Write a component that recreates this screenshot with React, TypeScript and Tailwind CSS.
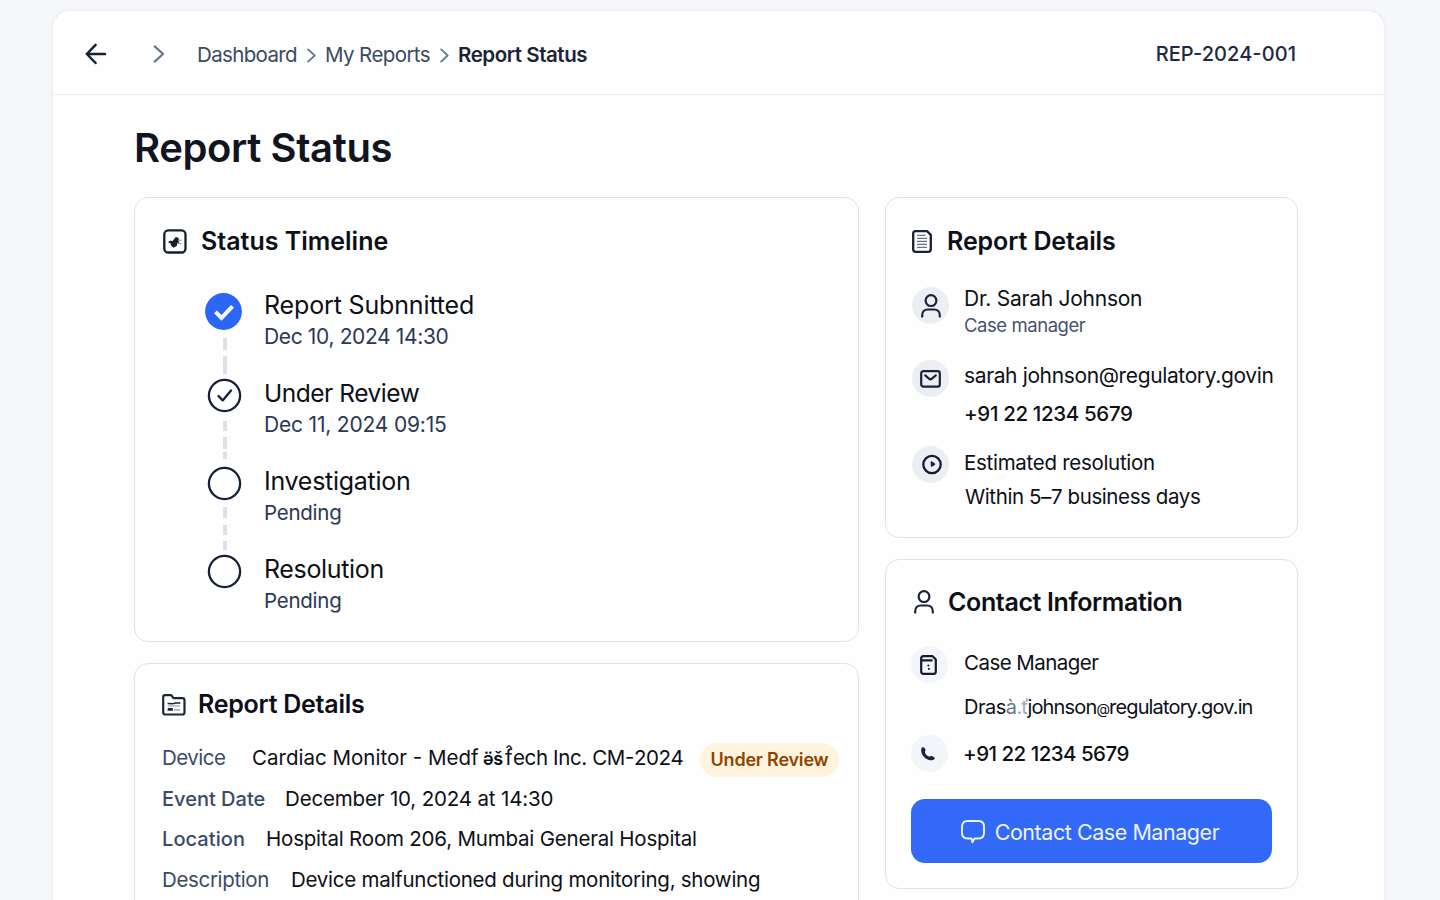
import React from 'react';
import type { ReactNode } from 'react';

type State = 'done' | 'active' | 'pending';

function BackIcon() {
  return (
    <svg width="22" height="22" viewBox="0 0 22 22" fill="none" stroke="#172136" strokeWidth="2.5" strokeLinecap="round" strokeLinejoin="round">
      <path d="M20 11H1.8M10.6 1.8L1.8 11l8.8 9" />
    </svg>
  );
}

function Chevron({ className }: { className: string }) {
  return (
    <svg className={className} viewBox="0 0 10 16" fill="none" stroke="#66748d" strokeWidth="1.9" strokeLinecap="round" strokeLinejoin="round">
      <path d="M1.2 1.2L8.6 8l-7.4 6.8" />
    </svg>
  );
}

function TimelineIcon() {
  return (
    <svg className="-mt-[2px]" width="24" height="25" viewBox="0 0 24 25" fill="none" stroke="#161e30" strokeWidth="2.3">
      <rect x="1.3" y="1.3" width="21.2" height="22.2" rx="4" />
      <path d="M4.800 13l3-1.600 1.600.8 3.400-4.200 3 1-.4 3.200 1.200.8-2.400 1.600-.4 2.400-3.400 1.800-2.200-2-.6-2.400z" fill="#161e30" stroke="none" />
      <path d="M15 11.200h3.600M15 14.600h3.400" stroke="#7c879b" strokeWidth="1" />
    </svg>
  );
}

function FolderIcon() {
  return (
    <svg width="24" height="22" viewBox="0 0 24 22" fill="none" stroke="#1c2538" strokeWidth="2.2" strokeLinejoin="round">
      <path d="M1.2 3.2c0-1.2.7-2 1.8-2h6.2l2.3 3h8.8c1.4 0 2.2.8 2.2 2v12.3c0 1.2-.8 2-2.2 2H3.4c-1.4 0-2.200-.8-2.200-2z" />
      <path d="M5.6 9.600l5 .2 3-.8 4.800-.1" strokeWidth="1.500" />
      <path d="M5.800 12h12M12 15.900h6.200" stroke="#8a94a6" strokeWidth="1.100" />
      <path d="M6 14h4.800v2.800H5.400z" fill="#1c2538" stroke="none" />
    </svg>
  );
}

function DocumentIcon() {
  return (
    <svg width="20" height="23" viewBox="0 0 20 23" fill="none" stroke="#1a2134" strokeWidth="2.3" strokeLinejoin="round">
      <path d="M3.6 1.2h11.400l3.800 3.600v14.200c0 1.700-.9 2.800-2.600 2.800H3.600c-1.500 0-2.400-1-2.400-2.600V3.800c0-1.600.9-2.600 2.400-2.600z" />
      <path d="M5 5.400h8.500M5 8.400h10M5 11.400h10M5 14.400h10M5 17.400h10" stroke="#69748a" strokeWidth="1.400" />
    </svg>
  );
}

function PersonIcon({ className }: { className: string }) {
  return (
    <svg className={className} viewBox="0 0 20 24" fill="none" stroke="#1a2338" strokeWidth="2.2" strokeLinecap="round">
      <circle cx="10" cy="6.600" r="5.400" />
      <path d="M1.200 22.600v-1.400c0-3.400 2.300-5.700 5.600-5.700h6.400c3.300 0 5.600 2.300 5.600 5.700v1.400" />
    </svg>
  );
}

function MailIcon() {
  return (
    <svg width="21" height="18" viewBox="0 0 21 18" fill="none" stroke="#1a2338" strokeWidth="2.200" strokeLinecap="round" strokeLinejoin="round">
      <rect x="1.200" y="1.200" width="18.600" height="15.400" rx="2.200" />
      <path d="M5.200 5.400l3.800 3.200c.9.800 2 .8 2.900 0l3.900-3.200" />
    </svg>
  );
}

function ClockIcon() {
  return (
    <svg className="ml-[3px]" width="20" height="21" viewBox="0 0 20 21" fill="none" stroke="#141c30" strokeWidth="2.300">
      <circle cx="10" cy="10.500" r="8.700" />
      <path d="M9 7.600l3.200 1.600c.9.500.8 1.500-.1 1.900L9.400 12.600z" fill="#141c30" stroke="#141c30" strokeWidth="0.800" />
    </svg>
  );
}

function CaseIcon() {
  return (
    <svg className="-ml-[2px]" width="17" height="20" viewBox="0 0 17 20" fill="none" stroke="#141b2d" strokeWidth="2.200" strokeLinejoin="round">
      <path d="M1.200 3.600c0-1.600.8-2.400 2.200-2.400h9.200l3.200 3.400v11.800c0 1.500-.8 2.400-2.200 2.400H3.400c-1.400 0-2.200-.9-2.200-2.400zM1.400 5.400h11.200" />
      <path d="M7.600 10l1.400 1.200M8 13.800h1.800" strokeWidth="1.700" />
    </svg>
  );
}

function PhoneIcon() {
  return (
    <svg className="-ml-[3px]" width="14" height="14" viewBox="0 0 14 14" fill="#1b2540">
      <path d="M1 .6C1.800 0 3 0 3.600.900l.9 1.600c.3.700.1 1.300-.6 1.900-.3 2.200 2.600 5.200 4.800 5.100.6-.6 1.300-.7 1.900-.4l2.300.9c.9.500 1 1.500.4 2.300-.9 1-2.400 1.300-4.300.9C4.400 12.200.9 8.500.3 4.400.1 2.700.200 1.300 1 .6z" />
    </svg>
  );
}

function ChatIcon() {
  return (
    <svg className="-mt-[2px]" width="24" height="24" viewBox="0 0 24 24" fill="none" stroke="#eef3ff" strokeWidth="1.900" strokeLinejoin="round">
      <path d="M6.600 1h10.800c3.500 0 5.600 2.200 5.600 5.600v6.200c0 3.500-2.200 5.700-5.600 5.700h-3.800l-2.200 3.800-.8-3.800h-4C3.100 18.500 1 16.300 1 12.800V6.600C1 3.200 3.100 1 6.600 1z" />
    </svg>
  );
}

function Dot({ state }: { state: State }) {
  if (state === 'done') {
    return (
      <svg className="-ml-px block" width="37" height="37" viewBox="0 0 37 37" fill="none">
        <circle cx="18.500" cy="18.500" r="18.400" fill="#2c66f8" />
        <path d="M10.500 18.800l6 6 11-11.500" stroke="#fff" strokeWidth="4" />
      </svg>
    );
  }
  return (
    <svg className="ml-px block" width="35" height="35" viewBox="0 0 35 35" fill="none" stroke="#16203a" strokeWidth="2.300">
      <circle cx="17.500" cy="17.500" r="15.600" />
      {state === 'active' && <path d="M11.500 18l4.200 4.400 8.300-9.900" strokeLinecap="round" strokeLinejoin="round" />}
    </svg>
  );
}

function TimelineItem({ state, top, title, note, children }: { state: State; top: string; title: ReactNode; note: ReactNode; children?: ReactNode }) {
  return (
    <li className="flex h-[88px]">
      <div className={`flex w-[37px] flex-col items-center ${top}`}>
        <Dot state={state} />
        <div className="ml-[3px] flex flex-col items-center">{children}</div>
      </div>
      <div className="ml-[22px] whitespace-nowrap">
        <div className="text-[25px] leading-[30px] text-[#0d1017]">{title}</div>
        <div className="mt-[1px] text-[21px] leading-[32px] text-[#2b3854]">{note}</div>
      </div>
    </li>
  );
}

function Dash({ className }: { className: string }) {
  return <i className={`block w-[3.500px] bg-[#dde1e7] ${className}`} />;
}

function Bubble({ className, children }: { className: string; children: ReactNode }) {
  return <div className={`flex size-[37px] shrink-0 items-center justify-center rounded-full ${className}`}>{children}</div>;
}

function Card({ className, children }: { className: string; children: ReactNode }) {
  return <section className={`rounded-[14px] border border-[#dfe4ea] bg-[#fefefe] ${className}`}>{children}</section>;
}

export default function App() {
  return (
    <div className="h-[900px] w-[1440px] overflow-hidden bg-[#f5f7fa] pt-[11px] font-['Inter',sans-serif] text-[#0d1017]">
      <div className="ml-[53px] h-[920px] w-[1331px] rounded-[17px] bg-[#fefefe] shadow-[0_0_4px_rgba(40,60,100,0.10)]">
        <header className="flex h-[84px] items-center border-b border-[#ebeef3] pt-[3px] pl-[32px] whitespace-nowrap">
          <BackIcon />
          <Chevron className="ml-[46px] h-[18px] w-[12px]" />
          <nav className="mt-px ml-[32px] flex items-center text-[20.500px] leading-[28px] text-[#3c4963]">
            <span className="w-[110px] tracking-[-0.650px]">Dashboard</span>
            <Chevron className="mt-px h-[15px] w-[9px]" />
            <span className="ml-[9px] w-[115px] tracking-[-0.600px]">My Reports</span>
            <Chevron className="mt-px h-[15px] w-[9px]" />
            <span className="ml-[9px] font-semibold tracking-[-0.450px] text-[#1b2436]">Report Status</span>
          </nav>
          <span className="mr-[88px] ml-auto text-[20px] leading-[28px] font-medium tracking-[0.070px] text-[#1e2a44] [font-feature-settings:'case']">REP-2024-001</span>
        </header>

        <main className="pr-[87px] pl-[81px]">
          <h1 className="pt-[27px] text-[40px] leading-[52px] font-semibold tracking-[-0.400px] whitespace-nowrap text-[#10151f]">Report Status</h1>

          <div className="mt-[23px] flex items-start gap-[26px]">
            <div className="flex w-[725px] shrink-0 flex-col gap-[21px]">
              <Card className="h-[445px] pt-[28px] pl-[28px]">
                <h2 className="flex h-[32px] items-center gap-[14px] text-[25px] font-semibold whitespace-nowrap">
                  <TimelineIcon />
                  Status Timeline
                </h2>
                <ol className="mt-[32px] ml-[42px]">
                  <TimelineItem state="done" top="pt-[3px]" title={<span className="tracking-[-0.150px]">Report Subnnitted</span>} note={<span className="tracking-[-0.360px]">Dec 10, 2024 14:30</span>}>
                    <Dash className="mt-[8px] h-[12px]" />
                    <Dash className="mt-[6px] h-[18px]" />
                  </TimelineItem>
                  <TimelineItem state="active" top="pt-0" title={<span className="text-[24.500px] tracking-[-0.470px]">Under Review</span>} note={<span className="tracking-[-0.190px]">Dec 11, 2024 09:15</span>}>
                    <Dash className="mt-[8px] h-[10px]" />
                    <Dash className="mt-[6px] h-[12px]" />
                    <Dash className="mt-[3px] h-[7px]" />
                  </TimelineItem>
                  <TimelineItem state="pending" top="pt-0" title={<span className="tracking-[-0.270px]">Investigation</span>} note={<span className="text-[20.500px] tracking-[-0.250px]">Pending</span>}>
                    <Dash className="mt-[6px] h-[11px]" />
                    <Dash className="mt-[7px] h-[10px]" />
                    <Dash className="mt-[6px] h-[9px]" />
                  </TimelineItem>
                  <TimelineItem state="pending" top="pt-0" title={<span className="tracking-[-0.350px]">Resolution</span>} note={<span className="text-[20.500px] tracking-[-0.250px]">Pending</span>} />
                </ol>
              </Card>

              <Card className="h-[300px] pt-[25px] pl-[27px]">
                <h2 className="flex h-[32px] items-center gap-[12px] text-[25px] font-semibold tracking-[-0.260px] whitespace-nowrap">
                  <FolderIcon />
                  Report Details
                </h2>
                <dl className="mt-[17px] text-[20.500px] whitespace-nowrap">
                  <div className="flex h-[41px] items-center">
                    <dt className="w-[90px] tracking-[-0.500px] text-[#3c4a68]">Device</dt>
                    <dd className="flex items-center">
                      <span className="w-[231px] tracking-[0.010px] [font-feature-settings:'case']">Cardiac Monitor - Medf</span>
                      <span className="w-[22px] text-[18px] font-semibold tracking-[-0.500px]">ӛš</span>
                      <span className="w-[8px]">f̂</span>
                      <span className="w-[187px] tracking-[-0.380px]">ech Inc. CM<span className="[font-feature-settings:'case']">-</span>2024</span>
                    </dd>
                    <dd className="mt-[2px] h-[34px] w-[139px] rounded-full bg-[#fff5df] text-center text-[18px] leading-[34px] font-semibold tracking-[-0.210px] text-[#924400]">Under Review</dd>
                  </div>
                  <div className="flex h-[41px] items-center">
                    <dt className="-mt-px w-[123px] text-[20px] font-medium text-[#3c4a68]">Event Date</dt>
                    <dd className="tracking-[-0.160px]">December 10, 2024 at 14:30</dd>
                  </div>
                  <div className="-mt-px flex h-[40px] items-center">
                    <dt className="w-[104px] text-[20px] font-medium tracking-[0.080px] text-[#3c4a68]">Location</dt>
                    <dd className="tracking-[-0.200px]">Hospital Room 206, Mumbai General Hospital</dd>
                  </div>
                  <div className="mt-px flex h-[41px] items-center">
                    <dt className="w-[129px] tracking-[-0.350px] text-[#3c4a68]">Description</dt>
                    <dd className="tracking-[-0.260px]">Device malfunctioned during monitoring, showing</dd>
                  </div>
                </dl>
              </Card>
            </div>

            <div className="flex w-[413px] shrink-0 flex-col gap-[21px]">
              <Card className="h-[341px] pt-[27px] pl-[26px]">
                <h2 className="flex h-[32px] items-center gap-[15px] text-[25px] font-semibold tracking-[-0.100px] whitespace-nowrap">
                  <DocumentIcon />
                  <span className="mt-px">Report Details</span>
                </h2>
                <div className="mt-[30px] flex h-[73px] gap-[15px] whitespace-nowrap">
                  <Bubble className="bg-[#eceef4]"><PersonIcon className="h-[24px] w-[20px]" /></Bubble>
                  <div className="-mt-[2px]">
                    <div className="text-[21px] leading-[28px] tracking-[-0.250px]">Dr. Sarah Johnson</div>
                    <div className="-mt-px text-[18.500px] leading-[26px] tracking-[-0.440px] text-[#46536d]">Case manager</div>
                  </div>
                </div>
                <div className="flex h-[86px] gap-[15px] whitespace-nowrap">
                  <Bubble className="bg-[#eceef4]"><MailIcon /></Bubble>
                  <div className="mt-px">
                    <div className="text-[21px] leading-[30px] tracking-[-0.370px]">sarah johnson@regulatory.govin</div>
                    <div className="mt-[8px] text-[20.500px] leading-[30px] font-medium tracking-[-0.350px]">+91 22 1234 5679</div>
                  </div>
                </div>
                <div className="flex gap-[15px] whitespace-nowrap">
                  <Bubble className="bg-[#eceef4]"><ClockIcon /></Bubble>
                  <div className="mt-[2px] text-[20.500px] leading-[30px]">
                    <div className="tracking-[-0.290px]">Estimated resolution</div>
                    <div className="mt-[4px] pl-px tracking-[-0.400px]">Within 5–7 business days</div>
                  </div>
                </div>
              </Card>

              <Card className="h-[330px] pt-[26px] pl-[25px]">
                <h2 className="flex h-[32px] items-center gap-[14px] pl-[3px] text-[25px] font-semibold tracking-[-0.370px] whitespace-nowrap">
                  <PersonIcon className="h-[24px] w-[20px]" />
                  <span className="mt-px">Contact Information</span>
                </h2>
                <div className="mt-[28px] flex h-[89px] gap-[16px] whitespace-nowrap">
                  <Bubble className="bg-[#f3f5fa]"><CaseIcon /></Bubble>
                  <div className="text-[20.500px] leading-[30px]">
                    <div className="mt-[2px] tracking-[-0.540px]">Case Manager</div>
                    <div className="mt-[14px] flex text-[20px]">
                      <span className="tracking-[-0.500px]">Dras<span className="text-[#66758f]">à</span></span>
                      <span className="w-[11px] tracking-[-1px] text-[#9aabc4]">.ť</span>
                      <span className="tracking-[-0.850px]">johnson<span className="text-[14px]">@</span>regulatory.gov.in</span>
                    </div>
                  </div>
                </div>
                <div className="flex h-[37px] items-center gap-[15px] whitespace-nowrap">
                  <Bubble className="bg-[#f3f5fa]"><PhoneIcon /></Bubble>
                  <div className="text-[20.500px] leading-[30px] font-medium tracking-[-0.520px]">+91 22 1234 5679</div>
                </div>
                <button className="mt-[27px] flex h-[64px] w-[361px] items-center justify-center gap-[10px] rounded-[14px] bg-[#3269f8] pt-[3px] pr-[3px] text-[21.500px] tracking-[-0.450px] whitespace-nowrap text-[#eef3ff]">
                  <ChatIcon />
                  Contact Case Manager
                </button>
              </Card>
            </div>
          </div>
        </main>
      </div>
    </div>
  );
}
